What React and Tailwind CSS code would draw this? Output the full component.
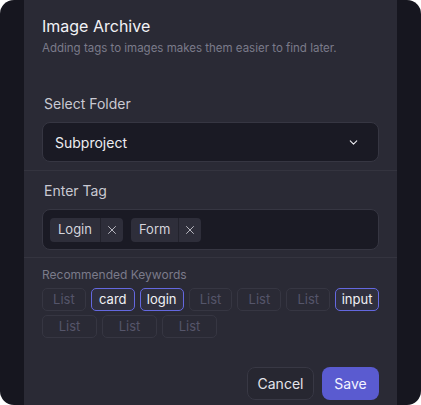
import React from 'react';
import { ChevronDown, X } from 'lucide-react';

const keywordsRow1 = [
    { label: 'List', active: false },
    { label: 'card', active: true },
    { label: 'login', active: true },
    { label: 'List', active: false },
    { label: 'List', active: false },
    { label: 'List', active: false },
    { label: 'input', active: true },
];

const keywordsRow2 = ['List', 'List', 'List'];

const Keyword = ({ label, active, wide }) => (
    <div
        className={`flex h-[23px] items-center justify-center rounded-[5px] border text-[13px] ${
            wide ? 'w-[55px]' : 'w-[44px]'
        } ${
            active
                ? 'border-[#6468e0] bg-[#30303f] text-[#f0f0f5]'
                : 'border-[#363642] text-[#55556a]'
        }`}
    >
        {label}
    </div>
);

const Tag = ({ label }) => (
    <div className="flex h-[24px] items-stretch overflow-hidden rounded-[4px] bg-[#2e2e3a] text-[13px] text-[#d4d4dc]">
        <span className="flex items-center px-[8px]">{label}</span>
        <span className="flex w-[23px] items-center justify-center border-l border-[#22222c]">
            <X size={14} strokeWidth={1.4} />
        </span>
    </div>
);

const App = () => {
    return (
        <div className="h-[405px] w-[421px] bg-white" style={{ fontFamily: 'Inter, "Noto Sans", sans-serif' }}>
            <div className="flex h-full w-full justify-center overflow-hidden rounded-[14px] bg-[#16161f]">
                <div className="flex h-full w-[373px] flex-col bg-[#2a2a35]">
                    <div className="px-[18px] pt-[14px]">
                        <h1 className="text-[16px] leading-[24px] text-[#f2f2f6]">Image Archive</h1>
                        <p className="mt-[2px] text-[11.5px] leading-[16px] text-[#7b7b8a]">
                            Adding tags to images makes them easier to find later.
                        </p>
                    </div>

                    <div className="px-[18px] pb-[8px] pt-[38px]">
                        <label className="block pl-[2px] text-[14px] leading-[20px] text-[#c9c9d2]">Select Folder</label>
                        <div className="mt-[8px] flex h-[40px] items-center justify-between rounded-[8px] border border-[#363642] bg-[#1a1a24] pl-[12px] pr-[18px] text-[14px] text-[#ededf2]">
                            <span>Subproject</span>
                            <ChevronDown size={13} strokeWidth={2} />
                        </div>
                    </div>

                    <div className="border-t border-[#34343f] px-[18px] pb-[7px] pt-[10px]">
                        <label className="block pl-[2px] text-[14px] leading-[20px] text-[#c9c9d2]">Enter Tag</label>
                        <div className="mt-[8px] flex h-[41px] items-center gap-[8px] rounded-[8px] border border-[#363642] bg-[#1a1a24] px-[7px]">
                            <Tag label="Login" />
                            <Tag label="Form" />
                        </div>
                    </div>

                    <div className="border-t border-[#34343f] px-[18px] pt-[9px]">
                        <p className="text-[12px] leading-[16px] text-[#7b7b8a]">Recommended Keywords</p>
                        <div className="mt-[5px] flex gap-[5px]">
                            {keywordsRow1.map((k, i) => (
                                <Keyword key={i} label={k.label} active={k.active} />
                            ))}
                        </div>
                        <div className="mt-[4px] flex gap-[5px]">
                            {keywordsRow2.map((k, i) => (
                                <Keyword key={i} label={k} wide />
                            ))}
                        </div>
                    </div>

                    <div className="mt-auto flex justify-end gap-[8px] px-[18px] pb-[5px]">
                        <button className="h-[33px] w-[67px] rounded-[8px] border border-[#383844] bg-[#272731] text-[14px] text-[#e4e4ea]">
                            Cancel
                        </button>
                        <button className="h-[33px] w-[57px] rounded-[8px] bg-[#5a5bd0] text-[14px] text-[#f4f4ff]">
                            Save
                        </button>
                    </div>
                </div>
            </div>
        </div>
    );
};

export default App;
